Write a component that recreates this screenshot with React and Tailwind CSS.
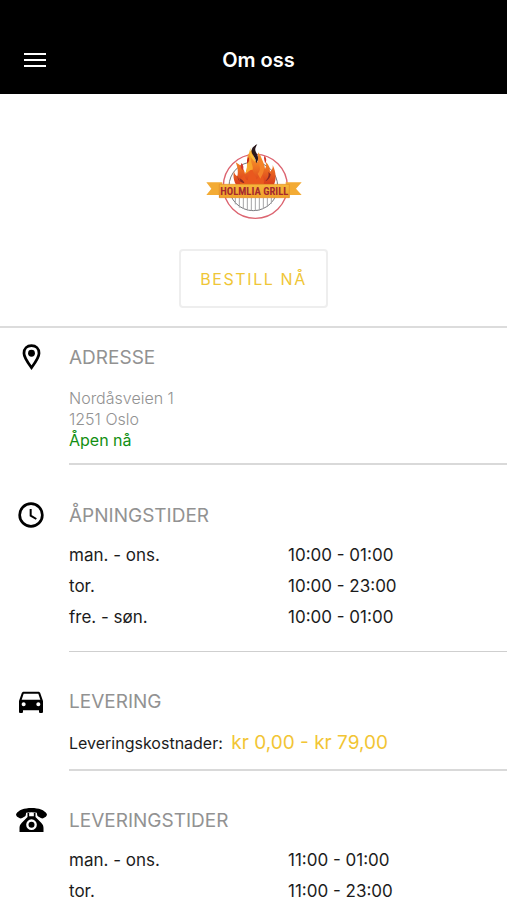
import { MdDirectionsCar } from 'react-icons/md';

const openingHours = [
  { days: 'man. - ons.', hours: '10:00 - 01:00' },
  { days: 'tor.', hours: '10:00 - 23:00' },
  { days: 'fre. - søn.', hours: '10:00 - 01:00' },
];

const deliveryHours = [
  { days: 'man. - ons.', hours: '11:00 - 01:00' },
  { days: 'tor.', hours: '11:00 - 23:00' },
];

function PinIcon() {
  return (
    <svg viewBox="0 0 54 76" className="h-[26px] w-[19px]" aria-hidden="true">
      <path
        d="M27 5C14 5 5 14 5 27c0 13 14 31 22 42 8-11 22-29 22-42C49 14 40 5 27 5z"
        fill="none"
        stroke="#000"
        strokeWidth="8"
      />
      <circle cx="27" cy="27" r="10" />
    </svg>
  );
}

function ClockIcon() {
  return (
    <svg viewBox="0 0 78 78" className="size-[26px]" fill="none" stroke="#000" aria-hidden="true">
      <circle cx="39" cy="39" r="34" strokeWidth="8" />
      <path d="M38 21v20l17 10" strokeWidth="6" />
    </svg>
  );
}

function PhoneIcon() {
  return (
    <svg viewBox="0 0 92 72" className="h-[24px] w-[31px]" aria-hidden="true">
      <path d="M0 18C7 6 24 0 46 0s39 6 46 18c1 3-1 6-3 8l-8 5c-2 1-5 0-7-1l-9-5c-2-2-2-6-3-11-10-2-22-2-32 0-1 5-1 9-3 11l-9 5c-2 1-5 2-7 1l-8-5c-2-2-4-5-3-8z" />
      <path
        fillRule="evenodd"
        d="M34 15h5v10h14V15h5v12l17 17c6 6 7 11 7 17v11H10V61c0-6 1-11 7-17l17-17zM46 34a16 16 0 1 0 0 32 16 16 0 0 0 0-32z"
      />
      <circle cx="46" cy="50" r="9" />
    </svg>
  );
}

function Logo() {
  return (
    <svg viewBox="48 27 288 228" className="h-[76px] w-[96px]" role="img" aria-label="Holmlia Grill">
      <defs>
        <linearGradient id="flame" x1="0" y1="0" x2="0" y2="1">
          <stop offset="0" stopColor="#f9b233" />
          <stop offset="0.500" stopColor="#ee7623" />
          <stop offset="1" stopColor="#d93a1c" />
        </linearGradient>
        <linearGradient id="ribbon" x1="0" y1="0" x2="0" y2="1">
          <stop offset="0" stopColor="#f6b73c" />
          <stop offset="1" stopColor="#f0a02c" />
        </linearGradient>
      </defs>
      <circle cx="196" cy="154" r="96" fill="#fff" stroke="#dc6470" strokeWidth="4" />
      <circle cx="190" cy="154" r="73" fill="none" stroke="#77787c" strokeWidth="3" />
      <path
        d="M136 188v20M148 188v30M160 188v34M172 188v38M184 188v39M196 188v39M208 188v38M220 188v34M232 188v28M244 188v18"
        stroke="#a5a5a8"
        strokeWidth="3"
      />
      {/* flames */}
      <path
        d="M138 149c-8-14-9-28-6-41 1 9 5 13 10 16 3-14 1-28-5-42 17 9 26 20 28 34 7-12 7-24 6-36-1-17 6-31 20-39-6 20 4 30 10 43 6-10 3-22 3-32 5 5 8 10 10 16 6 14 10 22 11 34 4-7 4-14 2-22 11 10 13 20 13 30 7-5 9-11 8-20 10 20 12 42 4 59z"
        fill="url(#flame)"
      />
      <path
        d="M151 149c-4-16 4-20 13-31 1 14 4 16 9 18 5-17 4-30 12-45 0 20 11 27 15 42 8-7 8-15 7-25 12 12 17 24 14 41z"
        fill="#e9581e"
      />
      <path d="M165 118c5-10 6-19 6-31 2-17 8-21 13-25-5 20 7 27 4 42-9 0-13 6-23 14z" fill="#f8a72b" />
      <path d="M203 116c9-10 8-18 3-30-6-13-4-22 2-29 1 17 15 26 14 43-1 15-6 21-11 31z" fill="#f4832a" />
      <path d="M202 28c-13 5-19 13-17 23 2 10 14 18 13 34 11-14 5-24 0-33-5-9-1-16 4-24z" fill="#29171b" />
      <path d="M186 36c-7 8-5 16 1 24 5 7 9 12 8 21-8-10-16-17-17-28 0-7 3-12 8-17z" fill="#fbbf36" />
      <path d="M177 66c-7 6-7 13-5 20 6-6 6-13 5-20z" fill="#c5281f" />
      <path d="M155 84c-5 8-3 15 3 22 4-8 2-15-3-22zM224 62c-5 9 1 15 1 24 6-9 4-17-1-24z" fill="#d3362a" />
      <path d="M144 121c-3 9 0 14 8 20l-4-11c7 2 12 7 15 14-9 0-20-8-19-23zM235 111c3 10-1 18-9 28 8-2 15-11 16-21z" fill="#8c2a23" />
      {/* ribbon */}
      <path d="M49 142h48v38H49l15-19zM335 142h-48v38h48l-17-19z" fill="#f3ab35" />
      <path d="M87 180v8l13-8zM298 180v8l-14-8z" fill="#b86a20" />
      <path d="M88 148h210v40H88z" fill="url(#ribbon)" stroke="#e38b29" strokeWidth="2" />
      <text
        x="193"
        y="180"
        textAnchor="middle"
        fontSize="32"
        fontWeight="700"
        fill="#a5292e"
        className="font-['Roboto_Condensed','Roboto',sans-serif]"
      >
        HOLMLIA GRILL
      </text>
    </svg>
  );
}

function Section({ icon, title, className, children }) {
  return (
    <section className="flex">
      <div className={`flex w-[69px] shrink-0 items-start pr-[7px] ${className}`}>
        <div className="flex h-6 w-full items-center justify-center">{icon}</div>
      </div>
      <div className={`min-w-0 flex-1 border-[#d9d9d9] ${className}`}>
        <h2 className="text-[19px] leading-[26px] text-[#929292]">{title}</h2>
        {children}
      </div>
    </section>
  );
}

function HoursTable({ label, rows }) {
  return (
    <table className="mt-[11px] w-full table-fixed text-left text-[17px] leading-[31px] text-[#1c1c1c]" aria-label={label}>
      <tbody>
        {rows.map((row) => (
          <tr key={row.days}>
            <th scope="row" className="p-0 font-normal">{row.days}</th>
            <td className="p-0">{row.hours}</td>
          </tr>
        ))}
      </tbody>
    </table>
  );
}

export default function App() {
  return (
    <div className="min-h-screen bg-white font-['Inter',sans-serif] text-black">
      <header className="grid grid-cols-[1fr_auto_1fr] items-center bg-black pt-[46px] pr-[14px] pb-5 pl-6 text-white">
        <button type="button" aria-label="Meny" className="flex h-7 w-[22px] flex-col justify-center gap-1">
          <span className="h-[2px] w-full bg-white" />
          <span className="h-[2px] w-full bg-white" />
          <span className="h-[2px] w-full bg-white" />
        </button>
        <h1 className="text-xl leading-7 font-semibold">Om oss</h1>
      </header>

      <main>
        <div className="flex flex-col items-center border-b-2 border-[#dcdcdc] pt-[50px] pb-[18px]">
          <Logo />
          <button
            type="button"
            className="mt-[29px] h-[59px] rounded border-2 border-[#eeeeee] px-[19px] text-base tracking-widest text-[#efc637]"
          >
            BESTILL NÅ
          </button>
        </div>

        <Section icon={<PinIcon />} title="ADRESSE" className="border-b-2 border-b-transparent pt-[17px] pb-3 last:border-b-[#d9d9d9]">
          <address className="mt-[17px] text-base leading-[21px] font-light text-[#929292] not-italic">
            Nordåsveien 1
            <br />
            1251 Oslo
          </address>
          <p className="text-base leading-[21px] text-[#128f12]">Åpen nå</p>
        </Section>

        <Section
          icon={<ClockIcon />}
          title="ÅPNINGSTIDER"
          className="border-b border-b-transparent pt-[38px] pb-[18px] last:border-b-[#cfcfcf]"
        >
          <HoursTable label="Åpningstider" rows={openingHours} />
        </Section>

        <Section
          icon={<MdDirectionsCar className="size-8 shrink-0" />}
          title="LEVERING"
          className="border-b-2 border-b-transparent pt-[37px] pb-[14px] last:border-b-[#d9d9d9]"
        >
          <p className="mt-4 text-base leading-6 text-[#1c1c1c]">
            Leveringskostnader: <span className="ml-1 text-[19px] text-[#f2c534]">kr 0,00 - kr 79,00</span>
          </p>
        </Section>

        <Section icon={<PhoneIcon />} title="LEVERINGSTIDER" className="pt-[37px]">
          <HoursTable label="Leveringstider" rows={deliveryHours} />
        </Section>
      </main>
    </div>
  );
}
